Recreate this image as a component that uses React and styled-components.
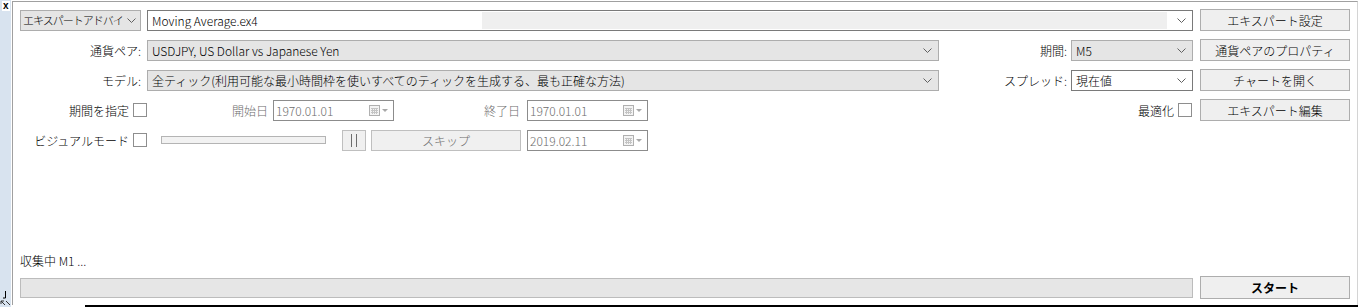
import React from 'react';
import styled, { createGlobalStyle } from 'styled-components';

const GlobalStyle = createGlobalStyle`
  html, body {
    margin: 0;
    padding: 0;
    background: #ffffff;
  }
  body {
    width: 1362px;
    height: 307px;
    overflow: hidden;
    font-family: "Noto Sans CJK JP", "Liberation Sans", sans-serif;
    font-size: 12px;
    font-weight: 300;
    color: #000;
  }
`;

const Screen = styled.div`
  display: flex;
  flex-direction: row;
  width: 1362px;
  height: 307px;
`;

const Strip = styled.div`
  width: 11px;
  margin-right: 1px;
  background: #d8e3ef;
  display: flex;
  flex-direction: column;
  justify-content: space-between;
  align-items: flex-start;
`;

const CloseMark = styled.span`
  font-family: "Liberation Sans", sans-serif;
  font-weight: bold;
  font-size: 10px;
  line-height: 10px;
  margin: 1px 0 0 2px;
  background: #fff;
  padding: 0 1px;
`;

const Main = styled.div`
  flex: 1;
  display: flex;
  flex-direction: column;
`;

const Panel = styled.div`
  box-sizing: border-box;
  width: 1346px;
  height: 304px;
  margin-top: 1px;
  border-left: 1px solid #a0a0a0;
  border-top: 1px solid #a0a0a0;
  border-right: 1px solid #d4d4d4;
  padding: 7px 7px 6px 7px;
  display: flex;
  flex-direction: column;
`;

const BottomEdge = styled.div`
  height: 2px;
  margin-left: 73px;
  width: 1273px;
  background: #000;
`;

const Row = styled.div`
  display: flex;
  align-items: center;
  height: 22px;
  margin-bottom: 8px;
`;

const Label = styled.div`
  width: ${p => p.w}px;
  margin-right: ${p => p.mr || 0}px;
  text-align: right;
  padding-right: ${p => p.pr || 0}px;
  box-sizing: border-box;
  white-space: nowrap;
  color: ${p => (p.disabled ? '#6d6d6d' : '#000')};
`;

const Combo = styled.div`
  box-sizing: border-box;
  width: ${p => p.w}px;
  height: 21px;
  margin-right: ${p => p.mr || 0}px;
  border: 1px solid ${p => (p.white ? '#7a7a7a' : '#adadad')};
  background: ${p => (p.white ? '#fff' : '#e5e5e5')};
  display: flex;
  align-items: center;
  padding: 0 ${p => (p.narrow ? 4 : 6)}px 0 ${p => (p.narrow ? 2 : 4)}px;
  white-space: nowrap;
  overflow: hidden;
`;

const ComboText = styled.span`
  flex: 1;
  overflow: hidden;
  font-size: ${p => (p.tight ? '11px' : 'inherit')};
  letter-spacing: ${p => (p.tight ? '-1px' : 'normal')};
`;

const EditField = styled.div`
  box-sizing: border-box;
  width: ${p => p.w}px;
  height: 21px;
  margin-right: ${p => p.mr || 0}px;
  border: 1px solid #7a7a7a;
  background: #fff;
  display: flex;
  align-items: stretch;
  padding: 1px 6px 1px 1px;
`;

const EditText = styled.span`
  width: 330px;
  background: #fff;
  padding-left: 3px;
  display: flex;
  align-items: center;
`;

const EditRest = styled.span`
  flex: 1;
  background: #efefef;
  margin-right: 10px;
`;

const ChevronSlot = styled.span`
  display: flex;
  align-items: center;
`;

const Button = styled.button`
  box-sizing: border-box;
  width: ${p => p.w || 150}px;
  height: ${p => p.h || 22}px;
  margin-right: ${p => p.mr || 0}px;
  border: 1px solid ${p => (p.disabled ? '#bfbfbf' : '#adadad')};
  background: ${p => (p.disabled ? '#f0f0f0' : '#efefef')};
  color: ${p => (p.disabled ? '#6d6d6d' : '#000')};
  font-family: inherit;
  font-size: 12px;
  font-weight: ${p => (p.bold ? 'bold' : 300)};
  padding: 0;
  display: flex;
  align-items: center;
  justify-content: center;
  white-space: nowrap;
`;

const Check = styled.span`
  box-sizing: border-box;
  width: 14px;
  height: 14px;
  margin-right: ${p => p.mr || 0}px;
  border: 1px solid #8e8e8e;
  background: #fff;
  flex-shrink: 0;
`;

const DateBox = styled.div`
  box-sizing: border-box;
  width: 121px;
  height: 21px;
  margin-right: ${p => p.mr || 0}px;
  border: 1px solid #8c8c8c;
  background: #fff;
  color: #6d6d6d;
  display: flex;
  align-items: center;
  padding: 0 4px 0 2px;
`;

const DateText = styled.span`
  flex: 1;
`;

const Track = styled.div`
  box-sizing: border-box;
  width: 165px;
  height: 8px;
  margin: 0 16px 0 14px;
  border: 1px solid #b4b4b4;
  background: #f2f2f2;
`;

const Spacer = styled.div`
  flex: 1;
`;

const Bottom = styled.div`
  margin-top: auto;
  display: flex;
  flex-direction: column;
`;

const Status = styled.div`
  height: 14px;
  line-height: 14px;
  margin-bottom: 8px;
`;

const ProgressRow = styled.div`
  display: flex;
  align-items: center;
`;

const Progress = styled.div`
  box-sizing: border-box;
  width: 1173px;
  height: 20px;
  margin-right: 7px;
  border: 1px solid #bcbcbc;
  background: #e6e6e6;
`;

const Chevron = () => (
  <svg width="9" height="5" viewBox="0 0 9 5">
    <path d="M0.5 0.5 L4.5 4.5 L8.5 0.5" fill="none" stroke="#606060" strokeWidth="1" />
  </svg>
);

const PauseIcon = () => (
  <svg width="8" height="13" viewBox="0 0 8 13">
    <path d="M1.5 0v13M6.5 0v13" stroke="#6d6d6d" strokeWidth="1" />
  </svg>
);

const CalIcon = () => (
  <svg width="20" height="11" viewBox="0 0 20 11">
    <rect x="0.5" y="0.5" width="10" height="10" fill="#f4f4f4" stroke="#b0b0b0" />
    <path d="M2 3.5h7M2 5.5h7M2 7.5h7M3.5 3v6M5.5 3v6M7.5 3v6" stroke="#c4c4c4" strokeWidth="1" />
    <path d="M13 4 L19 4 L16 7 Z" fill="#a8a8a8" />
  </svg>
);

const DateField = ({ value, mr }) => (
  <DateBox mr={mr}>
    <DateText>{value}</DateText>
    <CalIcon />
  </DateBox>
);

const CornerIcon = () => (
  <svg width="11" height="17" viewBox="0 0 11 17">
    <path d="M5.5 1v7H3" fill="none" stroke="#000" strokeWidth="1" />
    <path d="M1 11 L5 15 M1 11 L1 14 M1 11 L4 11 M6 11 L10 15" fill="none" stroke="#333" strokeWidth="1" />
  </svg>
);

export default function App() {
  return (
    <>
      <GlobalStyle />
      <Screen>
        <Strip>
          <CloseMark>x</CloseMark>
          <CornerIcon />
        </Strip>
        <Main>
          <Panel>
            <Row>
              <Combo w={121} mr={6} narrow>
                <ComboText tight>エキスパートアドバイ</ComboText>
                <Chevron />
              </Combo>
              <EditField w={1046} mr={7}>
                <EditText>Moving Average.ex4</EditText>
                <EditRest />
                <ChevronSlot><Chevron /></ChevronSlot>
              </EditField>
              <Button>エキスパート設定</Button>
            </Row>
            <Row>
              <Label w={121} mr={6}>通貨ペア:</Label>
              <Combo w={792}>
                <ComboText>USDJPY, US Dollar vs Japanese Yen</ComboText>
                <Chevron />
              </Combo>
              <Label w={128} mr={4}>期間:</Label>
              <Combo w={122} mr={7}>
                <ComboText>M5</ComboText>
                <Chevron />
              </Combo>
              <Button>通貨ペアのプロパティ</Button>
            </Row>
            <Row>
              <Label w={121} mr={6}>モデル:</Label>
              <Combo w={792}>
                <ComboText>全ティック(利用可能な最小時間枠を使いすべてのティックを生成する、最も正確な方法)</ComboText>
                <Chevron />
              </Combo>
              <Label w={128} mr={4}>スプレッド:</Label>
              <Combo w={122} mr={7} white>
                <ComboText>現在値</ComboText>
                <Chevron />
              </Combo>
              <Button>チャートを開く</Button>
            </Row>
            <Row>
              <Label w={113} pr={4}>期間を指定</Label>
              <Check />
              <Label w={126} pr={5} disabled>開始日</Label>
              <DateField value="1970.01.01" />
              <Label w={133} pr={7} disabled>終了日</Label>
              <DateField value="1970.01.01" />
              <Spacer />
              <Label w={60} pr={4}>最適化</Label>
              <Check mr={8} />
              <Button>エキスパート編集</Button>
            </Row>
            <Row>
              <Label w={113} pr={4}>ビジュアルモード</Label>
              <Check />
              <Track />
              <Button w={24} h={21} mr={5} disabled aria-label="pause"><PauseIcon /></Button>
              <Button w={150} h={21} mr={6} disabled>スキップ</Button>
              <DateField value="2019.02.11" />
            </Row>
            <Bottom>
              <Status>収集中 M1 ...</Status>
              <ProgressRow>
                <Progress />
                <Button bold h={23}>スタート</Button>
              </ProgressRow>
            </Bottom>
          </Panel>
          <BottomEdge />
        </Main>
      </Screen>
    </>
  );
}
